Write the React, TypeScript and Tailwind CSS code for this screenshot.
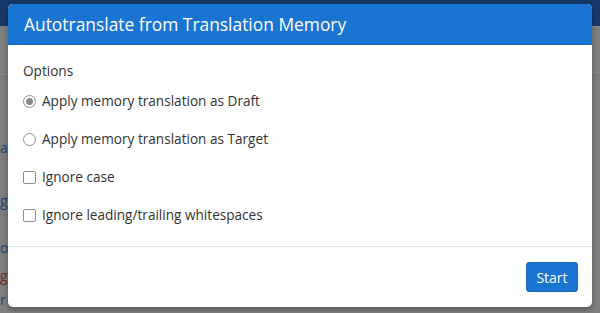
import React from "react";

const options = [
  { kind: "radio", label: "Apply memory translation as Draft", checked: true },
  { kind: "radio", label: "Apply memory translation as Target", checked: false },
  { kind: "checkbox", label: "Ignore case", checked: false },
  { kind: "checkbox", label: "Ignore leading/trailing whitespaces", checked: false },
];

function Radio({ checked }: { checked: boolean }) {
  return (
    <span className="flex h-[13px] w-[13px] shrink-0 items-center justify-center rounded-full border border-[#8e8e8e] bg-white">
      {checked && <span className="h-[7px] w-[7px] rounded-full bg-[#8a8a8a]" />}
    </span>
  );
}

function Checkbox() {
  return <span className="h-[13px] w-[13px] shrink-0 rounded-[2px] border border-[#8e8e8e] bg-white" />;
}

export default function App() {
  return (
    <div className="relative h-[313px] w-[600px] overflow-hidden bg-[#7f7f7f] font-['Open_Sans',sans-serif]">
      {/* page behind the overlay */}
      <div className="h-[26px] bg-[#17396a]" />
      <div className="flex">
        <div className="w-[8px] border-t border-[#8c8c8c] mt-[48px] flex flex-col text-[14px] leading-none">
          <span className="mt-[66px] text-[#1c4680]">a</span>
          <span className="mt-[39px] text-[#1c4680]">g</span>
          <span className="mt-[33px] text-[#1c4680]">o</span>
          <span className="mt-[14px] text-[#7a2626]">g</span>
          <span className="mt-[10px] text-[#1c4680]">r</span>
        </div>
        <div className="flex-1" />
        <div className="w-[8px] flex flex-col">
          <div className="h-[2px] border-t border-[#8a8a8a]" />
          <div className="mt-[44px] border-t border-[#888888]" />
        </div>
      </div>

      {/* modal */}
      <div className="absolute left-[8px] top-[4px] flex h-[303px] w-[584px] flex-col overflow-hidden rounded-[5px] bg-white shadow-[0_2px_6px_rgba(0,0,0,0.35)]">
        <div className="flex h-[41px] shrink-0 items-center bg-[#1a74d2] px-[16px] border-b border-[#1466bd]">
          <h1 className="text-[17.4px] text-white">Autotranslate from Translation Memory</h1>
        </div>
        <div className="flex flex-1 flex-col px-[15px] pt-[16px]">
          <p className="text-[13.6px] leading-[20px] text-[#333]">Options</p>
          <div className="mt-[10px] flex flex-col gap-[18px]">
            {options.map((o) => (
              <label key={o.label} className="flex h-[20px] items-center gap-[6px] text-[13.6px] text-[#333]">
                {o.kind === "radio" ? <Radio checked={o.checked} /> : <Checkbox />}
                <span>{o.label}</span>
              </label>
            ))}
          </div>
        </div>
        <div className="flex h-[61px] shrink-0 items-center justify-end border-t border-[#e5e5e5] px-[14px]">
          <button className="h-[30px] w-[52px] rounded-[3px] bg-[#1a74d2] text-[14px] font-medium text-white border border-[#1667c0]">
            Start
          </button>
        </div>
      </div>
    </div>
  );
}
